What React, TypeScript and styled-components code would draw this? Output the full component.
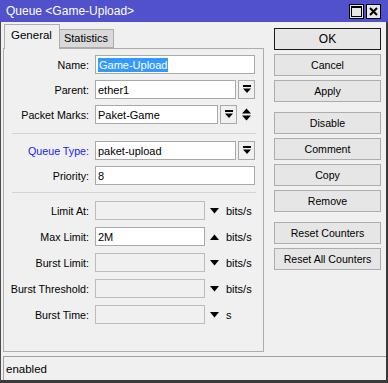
import React from 'react';
import styled, { createGlobalStyle } from 'styled-components';

const GlobalStyle = createGlobalStyle`
  html, body {
    margin: 0;
    padding: 0;
    background: #f0f0f0;
  }
  * {
    box-sizing: border-box;
  }
`;

const Window = styled.div`
  width: 388px;
  height: 383px;
  display: flex;
  flex-direction: column;
  background: #f0f0f0;
  border-left: 1px solid #4a4a4a;
  border-right: 2px solid #3a3a3a;
  border-bottom: 3px solid #3a3a3a;
  font-family: 'Liberation Sans', Arial, sans-serif;
  font-size: 10.7px;
  color: #000;
`;

const TitleBar = styled.div`
  height: 22px;
  flex: none;
  display: flex;
  align-items: center;
  justify-content: space-between;
  background: #5151cc;
  padding: 0 7px 0 5px;
  margin-left: -1px;
  margin-right: -2px;
`;

const Title = styled.span`
  color: #ffffff;
  font-size: 12px;
  padding-left: 1px;
`;

const TitleButtons = styled.div`
  display: flex;
  gap: 2px;
  padding-top: 1px;
`;

const TitleButton = styled.div`
  width: 15px;
  height: 15px;
  border: 1px solid #000;
  background: #e6e6e6;
  display: flex;
  align-items: center;
  justify-content: center;
`;

const Body = styled.div`
  flex: 1;
  display: flex;
  gap: 10px;
  padding: 2px 5px 0 2px;
`;

const LeftColumn = styled.div`
  width: 261px;
  display: flex;
  flex-direction: column;
`;

const Tabs = styled.div`
  display: flex;
  align-items: flex-end;
  height: 25px;
  padding-left: 1px;
  position: relative;
  z-index: 1;
`;

const Tab = styled.div<{ $active?: boolean }>`
  height: ${(p) => (p.$active ? '25px' : '19px')};
  margin-bottom: ${(p) => (p.$active ? '0' : '1px')};
  padding: ${(p) => (p.$active ? '4px 7px 0 6px' : '2px 5px 0 4px')};
  font-size: ${(p) => (p.$active ? '11.5px' : '11px')};
  background: ${(p) => (p.$active ? '#f0f0f0' : '#d9d9d9')};
  border: 1px solid #adadad;
  border-bottom: ${(p) => (p.$active ? 'none' : '1px solid #adadad')};
  border-left: ${(p) => (p.$active ? '1px solid #adadad' : 'none')};
`;

const Panel = styled.div`
  height: 304px;
  margin-top: -1px;
  border: 1px solid #adadad;
  padding: 6px 7px 0 0;
  display: flex;
  flex-direction: column;
`;

const Section = styled.div<{ $gap: number }>`
  display: flex;
  flex-direction: column;
  gap: ${(p) => p.$gap}px;
`;

const Separator = styled.div<{ $top: number; $bottom: number }>`
  height: 1px;
  background: #d4d4d4;
  margin: ${(p) => p.$top}px 0 ${(p) => p.$bottom}px 8px;
`;

const Row = styled.div<{ $h: number }>`
  display: flex;
  align-items: center;
  height: ${(p) => p.$h}px;
`;

const Label = styled.label<{ $blue?: boolean }>`
  width: 85px;
  flex: none;
  text-align: right;
  margin-right: 6px;
  color: ${(p) => (p.$blue ? '#1a1af0' : '#000')};
  white-space: nowrap;
`;

const Input = styled.div<{ $w: number; $disabled?: boolean }>`
  width: ${(p) => p.$w}px;
  height: 100%;
  flex: none;
  border: 1px solid ${(p) => (p.$disabled ? '#bcbcbc' : '#a9a9a9')};
  background: ${(p) => (p.$disabled ? '#f0f0f0' : '#ffffff')};
  display: flex;
  align-items: center;
  padding-left: 2px;
  font-size: 11px;
  white-space: nowrap;
`;

const Selected = styled.span`
  background: #3399ff;
  color: #ffffff;
  padding: 1px 1px 1px 1px;
`;

const DropButton = styled.div`
  width: 17px;
  height: 100%;
  flex: none;
  margin-left: 2px;
  border: 1px solid #a9a9a9;
  background: #f0f0f0;
  display: flex;
  align-items: center;
  justify-content: center;
`;

const SideIcon = styled.div<{ $w: number }>`
  width: ${(p) => p.$w}px;
  flex: none;
  display: flex;
  align-items: center;
  justify-content: center;
`;

const Unit = styled.span`
  margin-left: 2px;
  font-size: 11px;
`;

const RightColumn = styled.div`
  width: 107px;
  padding-top: 4px;
  display: flex;
  flex-direction: column;
`;

const ButtonGroup = styled.div`
  display: flex;
  flex-direction: column;
  gap: 4px;
  margin-bottom: 10px;
`;

const Button = styled.div<{ $default?: boolean }>`
  height: 22px;
  border: 1px solid ${(p) => (p.$default ? '#1a1a1a' : '#adadad')};
  background: #e6e6e6;
  display: flex;
  align-items: center;
  justify-content: center;
  font-size: ${(p) => (p.$default ? '12px' : '10.6px')};
`;

const StatusBar = styled.div`
  height: 24px;
  flex: none;
  margin: 0 0 0 2px;
  border-top: 1px solid #a0a0a0;
  border-left: 1px solid #a0a0a0;
  display: flex;
  align-items: center;
  padding-left: 2px;
  font-size: 11.5px;
`;

const DropIcon = () => (
  <svg width="8" height="9" viewBox="0 0 8 9">
    <rect x="0" y="0" width="8" height="2" fill="#000" />
    <path d="M0 3.5 H8 L4 8 Z" fill="#000" />
  </svg>
);

const UpDownIcon = () => (
  <svg width="9" height="13" viewBox="0 0 9 13">
    <path d="M0 5.5 L4.5 0.5 L9 5.5 Z" fill="#000" />
    <path d="M0 7.5 H9 L4.5 12.5 Z" fill="#000" />
  </svg>
);

const Arrow = ({ up }: { up?: boolean }) => (
  <svg width="9" height="6" viewBox="0 0 9 6">
    {up ? <path d="M0 6 L4.5 0.5 L9 6 Z" fill="#000" /> : <path d="M0 0 H9 L4.5 5.5 Z" fill="#000" />}
  </svg>
);

const MaxIcon = () => (
  <svg width="11" height="11" viewBox="0 0 11 11">
    <rect x="0.5" y="0.5" width="10" height="10" fill="none" stroke="#000" />
    <rect x="0" y="0" width="11" height="2" fill="#000" />
  </svg>
);

const CloseIcon = () => (
  <svg width="9" height="9" viewBox="0 0 9 9">
    <path d="M1 1 L8 8 M8 1 L1 8" stroke="#000" strokeWidth="2" />
  </svg>
);

interface LimitField {
  label: string;
  value?: string;
  up?: boolean;
  unit: string;
}

const limits: LimitField[] = [
  { label: 'Limit At:', unit: 'bits/s' },
  { label: 'Max Limit:', value: '2M', up: true, unit: 'bits/s' },
  { label: 'Burst Limit:', unit: 'bits/s' },
  { label: 'Burst Threshold:', unit: 'bits/s' },
  { label: 'Burst Time:', unit: 's' },
];

const buttonGroups = [
  ['OK', 'Cancel', 'Apply'],
  ['Disable', 'Comment', 'Copy', 'Remove'],
  ['Reset Counters', 'Reset All Counters'],
];

const App: React.FC = () => {
  return (
    <>
      <GlobalStyle />
      <Window>
        <TitleBar>
          <Title>Queue &lt;Game-Upload&gt;</Title>
          <TitleButtons>
            <TitleButton>
              <MaxIcon />
            </TitleButton>
            <TitleButton>
              <CloseIcon />
            </TitleButton>
          </TitleButtons>
        </TitleBar>

        <Body>
          <LeftColumn>
            <Tabs>
              <Tab $active>General</Tab>
              <Tab>Statistics</Tab>
            </Tabs>
            <Panel>
              <Section $gap={6}>
                <Row $h={19}>
                  <Label>Name:</Label>
                  <Input $w={160}>
                    <Selected>Game-Upload</Selected>
                  </Input>
                </Row>
                <Row $h={19}>
                  <Label>Parent:</Label>
                  <Input $w={141}>ether1</Input>
                  <DropButton>
                    <DropIcon />
                  </DropButton>
                </Row>
                <Row $h={19}>
                  <Label>Packet Marks:</Label>
                  <Input $w={123}>Paket-Game</Input>
                  <DropButton>
                    <DropIcon />
                  </DropButton>
                  <SideIcon $w={18}>
                    <UpDownIcon />
                  </SideIcon>
                </Row>
              </Section>

              <Separator $top={9} $bottom={7} />

              <Section $gap={6}>
                <Row $h={19}>
                  <Label $blue>Queue Type:</Label>
                  <Input $w={141}>paket-upload</Input>
                  <DropButton>
                    <DropIcon />
                  </DropButton>
                </Row>
                <Row $h={19}>
                  <Label>Priority:</Label>
                  <Input $w={160}>8</Input>
                </Row>
              </Section>

              <Separator $top={7} $bottom={8} />

              <Section $gap={7}>
                {limits.map((f) => (
                  <Row $h={19} key={f.label}>
                    <Label>{f.label}</Label>
                    <Input $w={110} $disabled={!f.value}>
                      {f.value}
                    </Input>
                    <SideIcon $w={19}>
                      <Arrow up={f.up} />
                    </SideIcon>
                    <Unit>{f.unit}</Unit>
                  </Row>
                ))}
              </Section>
            </Panel>
          </LeftColumn>

          <RightColumn>
            {buttonGroups.map((group, i) => (
              <ButtonGroup key={i}>
                {group.map((b) => (
                  <Button key={b} $default={b === 'OK'}>
                    {b}
                  </Button>
                ))}
              </ButtonGroup>
            ))}
          </RightColumn>
        </Body>

        <StatusBar>enabled</StatusBar>
      </Window>
    </>
  );
};

export default App;
